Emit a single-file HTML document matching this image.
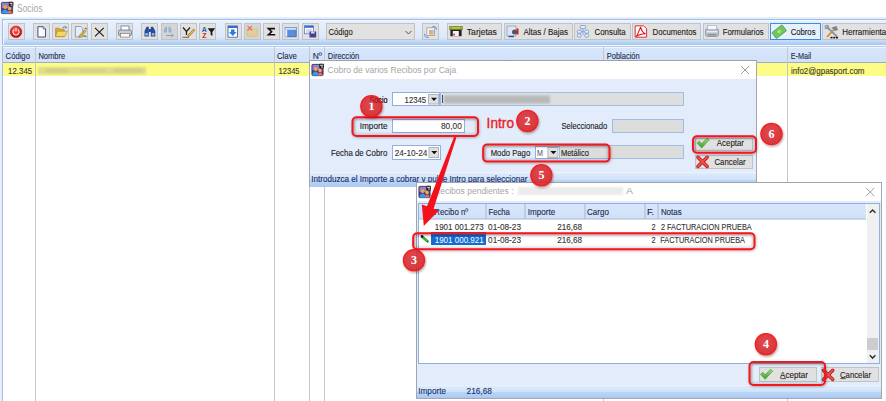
<!DOCTYPE html><html><head><meta charset="utf-8"><style>html,body{margin:0;padding:0;width:886px;height:401px;overflow:hidden;background:#fff}svg{display:block;font-family:"Liberation Sans",sans-serif}</style></head><body><svg width="886" height="401" viewBox="0 0 886 401" font-family="Liberation Sans, sans-serif"><rect x="0" y="0" width="886" height="401" fill="#ffffff" /><g transform="translate(1,2)"><rect x="0.3" y="0.3" width="11.4" height="11.4" rx="1.2" fill="#5a3a98" stroke="#2a2a3a" stroke-width="0.6"/><rect x="1" y="1" width="8" height="5" fill="#a090e0" opacity="0.8"/><circle cx="4.2" cy="5" r="1.9" fill="#f0a830"/><circle cx="8.6" cy="6.6" r="1.8" fill="#f0b040"/><path d="M0.8 11.6 Q1 8 4.2 7.6 Q7 8 7.2 11.6Z" fill="#28a0f0"/><path d="M6.2 11.6 Q6.4 9 8.6 8.8 Q11 9 11.3 11.6Z" fill="#f07050"/><rect x="7.8" y="-0.2" width="4.6" height="4.6" rx="0.8" fill="#1a1a1a"/><rect x="8.6" y="0.8" width="3" height="0.9" fill="#fff"/><rect x="9.6" y="2.6" width="2" height="0.9" fill="#fff"/></g><text x="17" y="12.2" font-size="10" fill="#a6a6a6" textLength="25.4" lengthAdjust="spacingAndGlyphs" >Socios</text><defs><linearGradient id="tb" x1="0" y1="0" x2="0" y2="1"><stop offset="0" stop-color="#e8f0fc"/><stop offset="0.7" stop-color="#dce9fa"/><stop offset="0.85" stop-color="#c4daf6"/><stop offset="1" stop-color="#a4c5f0"/></linearGradient><linearGradient id="hdr" x1="0" y1="0" x2="0" y2="1"><stop offset="0" stop-color="#d8e6fa"/><stop offset="1" stop-color="#d0e1f9"/></linearGradient><linearGradient id="sb" x1="0" y1="0" x2="0" y2="1"><stop offset="0" stop-color="#f0f6fe"/><stop offset="0.12" stop-color="#dde9fb"/><stop offset="0.5" stop-color="#d0e2f9"/><stop offset="0.55" stop-color="#bcd5f6"/><stop offset="1" stop-color="#aac9f3"/></linearGradient><filter id="sh" x="-30%" y="-30%" width="160%" height="160%"><feDropShadow dx="0.8" dy="1.5" stdDeviation="1.2" flood-color="#000" flood-opacity="0.35"/></filter><filter id="sh2" x="-10%" y="-30%" width="120%" height="160%"><feDropShadow dx="0.6" dy="1" stdDeviation="1" flood-color="#000" flood-opacity="0.3"/></filter><linearGradient id="chk" x1="0" y1="0" x2="0" y2="1"><stop offset="0" stop-color="#9be87a"/><stop offset="1" stop-color="#34a020"/></linearGradient><radialGradient id="pw" cx="0.45" cy="0.35" r="0.65"><stop offset="0" stop-color="#ff6a6a"/><stop offset="0.6" stop-color="#e02020"/><stop offset="1" stop-color="#b01010"/></radialGradient><filter id="bl2"><feGaussianBlur stdDeviation="0.8"/></filter><filter id="bl"><feGaussianBlur stdDeviation="1.3"/></filter><radialGradient id="cg" cx="0.45" cy="0.4" r="0.6"><stop offset="0" stop-color="#e03c40"/><stop offset="1" stop-color="#d22a30"/></radialGradient></defs><rect x="0" y="17" width="886" height="384" fill="#e6eefa" /><rect x="2" y="19" width="886" height="26" fill="url(#tb)" /><rect x="2" y="19" width="886" height="1" fill="#9dbde9" /><rect x="2" y="19" width="1" height="26" fill="#9dbde9" /><rect x="3" y="20" width="886" height="1" fill="#f4f8fe" /><rect x="3" y="20" width="1" height="24" fill="#f4f8fe" /><rect x="2" y="45" width="886" height="1" fill="#f7fafe" /><rect x="8.5" y="23.5" width="16" height="16" fill="#e1e1e1" stroke="#c2c2c2" stroke-width="1"/><rect x="33.5" y="23.5" width="16" height="16" fill="#e1e1e1" stroke="#c2c2c2" stroke-width="1"/><rect x="52.5" y="23.5" width="16" height="16" fill="#e1e1e1" stroke="#c2c2c2" stroke-width="1"/><rect x="71.5" y="23.5" width="16" height="16" fill="#e1e1e1" stroke="#c2c2c2" stroke-width="1"/><rect x="91.5" y="23.5" width="16" height="16" fill="#e1e1e1" stroke="#c2c2c2" stroke-width="1"/><rect x="116.5" y="23.5" width="16" height="16" fill="#e1e1e1" stroke="#c2c2c2" stroke-width="1"/><rect x="141.5" y="23.5" width="16" height="16" fill="#e1e1e1" stroke="#c2c2c2" stroke-width="1"/><rect x="161.5" y="23.5" width="16" height="16" fill="#d5d5d5" stroke="#c2c2c2" stroke-width="1"/><rect x="180.5" y="23.5" width="16" height="16" fill="#e1e1e1" stroke="#c2c2c2" stroke-width="1"/><rect x="199.5" y="23.5" width="16" height="16" fill="#e1e1e1" stroke="#c2c2c2" stroke-width="1"/><rect x="225.5" y="23.5" width="16" height="16" fill="#e1e1e1" stroke="#c2c2c2" stroke-width="1"/><rect x="244.5" y="23.5" width="16" height="16" fill="#d5d5d5" stroke="#c2c2c2" stroke-width="1"/><rect x="263.5" y="23.5" width="16" height="16" fill="#e1e1e1" stroke="#c2c2c2" stroke-width="1"/><rect x="282.5" y="23.5" width="16" height="16" fill="#e1e1e1" stroke="#c2c2c2" stroke-width="1"/><rect x="302.5" y="23.5" width="16" height="16" fill="#e1e1e1" stroke="#c2c2c2" stroke-width="1"/><rect x="422.5" y="23.5" width="16" height="16" fill="#e1e1e1" stroke="#c2c2c2" stroke-width="1"/><rect x="326.5" y="23.5" width="88" height="16" fill="#e1e1e1" stroke="#c2c2c2" stroke-width="1"/><text x="328.5" y="34.6" font-size="9.6" fill="#1b1b1b" stroke="#1b1b1b" stroke-width="0.12" textLength="24.2" lengthAdjust="spacingAndGlyphs" >Código</text><path d="M405.5 31 L408.5 34 L411.5 31" fill="none" stroke="#555" stroke-width="1"/><rect x="447.5" y="23.5" width="54" height="16" fill="#e1e1e1" stroke="#c2c2c2" stroke-width="1"/><text x="466.8" y="34.8" font-size="9.6" fill="#1b1b1b" stroke="#1b1b1b" stroke-width="0.12" textLength="30.1" lengthAdjust="spacingAndGlyphs" >Tarjetas</text><rect x="504.5" y="23.5" width="68" height="16" fill="#e1e1e1" stroke="#c2c2c2" stroke-width="1"/><text x="523.5" y="34.8" font-size="9.6" fill="#1b1b1b" stroke="#1b1b1b" stroke-width="0.12" textLength="44.5" lengthAdjust="spacingAndGlyphs" >Altas / Bajas</text><rect x="574.5" y="23.5" width="56" height="16" fill="#e1e1e1" stroke="#c2c2c2" stroke-width="1"/><text x="594.5" y="34.8" font-size="9.6" fill="#1b1b1b" stroke="#1b1b1b" stroke-width="0.12" textLength="31.1" lengthAdjust="spacingAndGlyphs" >Consulta</text><rect x="632.5" y="23.5" width="68" height="16" fill="#e1e1e1" stroke="#c2c2c2" stroke-width="1"/><text x="652.5" y="34.8" font-size="9.6" fill="#1b1b1b" stroke="#1b1b1b" stroke-width="0.12" textLength="43.9" lengthAdjust="spacingAndGlyphs" >Documentos</text><rect x="703.5" y="23.5" width="65" height="16" fill="#e1e1e1" stroke="#c2c2c2" stroke-width="1"/><text x="722.7" y="34.8" font-size="9.6" fill="#1b1b1b" stroke="#1b1b1b" stroke-width="0.12" textLength="40.9" lengthAdjust="spacingAndGlyphs" >Formularios</text><rect x="770.5" y="23.5" width="50" height="16" fill="#e5f1fb" stroke="#3b8de3" stroke-width="1"/><text x="790.7" y="34.8" font-size="9.6" fill="#1b1b1b" stroke="#1b1b1b" stroke-width="0.12" textLength="24.8" lengthAdjust="spacingAndGlyphs" >Cobros</text><rect x="822.5" y="23.5" width="79" height="16" fill="#e1e1e1" stroke="#c2c2c2" stroke-width="1"/><text x="842.3" y="34.8" font-size="9.6" fill="#1b1b1b" stroke="#1b1b1b" stroke-width="0.12" textLength="48" lengthAdjust="spacingAndGlyphs" >Herramientas</text><g><circle cx="16" cy="31.8" r="5.8" fill="url(#pw)" stroke="#a01010" stroke-width="0.5"/><path d="M14.1 29.4 A3.1 3.1 0 1 0 17.9 29.4" fill="none" stroke="#fff" stroke-width="1.1" stroke-opacity="0.9"/><path d="M16 27.6 V31.2" stroke="#fff" stroke-width="1.1" stroke-opacity="0.9"/><path d="M37.9 26.7 H43.2 L45.5 29 V37 H37.9Z" fill="#f4f7fc" stroke="#2a4580" stroke-width="0.9" stroke-linejoin="round"/><path d="M43.2 26.7 V29 H45.5" fill="#c8d4ea" stroke="#2a4580" stroke-width="0.6"/><rect x="39" y="28" width="3" height="8" fill="#fff"/><path d="M55.6 28.2 H59.2 L60.2 29.2 H64.2 V36.6 H55.6Z" fill="#e0a830" stroke="#906818" stroke-width="0.5"/><path d="M57.2 31.2 H67.4 L64.9 36.6 H55.6Z" fill="#f6d466" stroke="#a07820" stroke-width="0.5"/><path d="M62.5 27.6 Q64.8 25.6 66.6 27.6" fill="none" stroke="#4a78c8" stroke-width="1"/><path d="M65.6 26.6 L67 28 L65 28.4Z" fill="#4a78c8"/><path d="M75.4 26.5 H80.8 L82.8 28.5 V37 H75.4Z" fill="#e6ecf8" stroke="#6880b4" stroke-width="0.7"/><path d="M78.6 36.2 L84.6 30 L86 31.4 L80 37.4Z" fill="#e8b830" stroke="#6a5010" stroke-width="0.5"/><path d="M84.3 28.6 L86.2 27.4 L87 29.8Z" fill="#d03030"/><path d="M83.5 35.6 L86.5 36.6" stroke="#30a030" stroke-width="1.4"/><path d="M95 27.8 L103.8 36.3 M103.8 27.8 L95 36.3" stroke="#181818" stroke-width="1.1"/><rect x="121" y="26" width="8" height="5" fill="#fff" stroke="#4a7ad0" stroke-width="0.8"/><rect x="118.5" y="30" width="13" height="5.5" rx="1.5" fill="#c8ccd2" stroke="#60646a" stroke-width="0.7"/><rect x="120.5" y="33.5" width="9" height="3.6" fill="#fafafa" stroke="#707070" stroke-width="0.6"/><path d="M144.5 36.5 V31 L146.5 26.8 H148.8 V36.5Z M150.8 36.5 V26.8 H153 L155.3 31 V36.5Z" fill="#2a4c9c"/><rect x="148.6" y="29" width="2.4" height="3" fill="#2a4c9c"/><circle cx="146.6" cy="34.3" r="1.4" fill="#9cb8ea"/><circle cx="153.1" cy="34.3" r="1.4" fill="#9cb8ea"/><path d="M164 32.5 V29.5 L165.5 26.8 H167 V32.5Z M168.5 32.5 V26.8 H170 L171.5 29.5 V32.5Z" fill="#9ab0d0"/><path d="M166 35.5 H173 M171.5 34 L173.5 35.5 L171.5 37" fill="none" stroke="#7aa0d8" stroke-width="1"/><path d="M183 27.5 L186.5 31.5 V35 M190 27.5 L186.5 31.5" fill="none" stroke="#222" stroke-width="1.3"/><path d="M187.6 35.6 L193.6 29 L194.8 30.2 L188.8 36.8Z" fill="#f0c030" stroke="#5a4010" stroke-width="0.5"/><path d="M182.5 37.3 H189" stroke="#444" stroke-width="0.8"/><text x="201.8" y="31.6" font-size="7" font-weight="bold" fill="#2a5ab8">A</text><text x="202.3" y="38.2" font-size="7" font-weight="bold" fill="#c82828">Z</text><path d="M207.6 28.2 H215.2 L212.4 32 V36 L210.6 34.8 V32Z" fill="#1a1a1a"/><rect x="228" y="26" width="9.5" height="11.2" fill="#fff" stroke="#2a5aaa" stroke-width="0.8"/><rect x="228" y="26" width="9.5" height="2" fill="#3a6ac8"/><path d="M231 29.5 H234.5 V32 H236.5 L232.75 36 L229 32 H231Z" fill="#2a7ae0"/><rect x="247" y="29" width="10.5" height="7.3" rx="0.8" fill="#e2cf98" stroke="#c8b070" stroke-width="0.5"/><path d="M247.5 26 L252 30.5 M252 26 L247.5 30.5" stroke="#e87060" stroke-width="1.1"/><path d="M275 28.6 H268.4 L271.6 31.7 L268.4 34.8 H275.2" fill="none" stroke="#111" stroke-width="1.6" stroke-linejoin="miter"/><rect x="285.2" y="27.6" width="11" height="9.2" fill="#5c8ee0" stroke="#2a58a8" stroke-width="0.7"/><rect x="285.2" y="27.6" width="11" height="2.2" fill="#cfe0fa"/><rect x="285.2" y="29.8" width="2" height="7" fill="#e8f0fc"/><rect x="304.5" y="25.8" width="9" height="8" fill="#fff" stroke="#4070c0" stroke-width="0.7"/><rect x="304.5" y="25.8" width="9" height="2" fill="#3a6ac8"/><path d="M306 30 H312 M306 32 H312" stroke="#88a" stroke-width="0.6"/><rect x="309.5" y="31.5" width="6.7" height="6" fill="#4a3a9a"/><rect x="311" y="31.5" width="3.5" height="2" fill="#dde"/><rect x="426.8" y="27.8" width="7.8" height="7.8" fill="#eef4fc" stroke="#7aa0dc" stroke-width="0.8"/><rect x="429" y="30" width="4.6" height="4.6" fill="#f0a868"/><path d="M432.5 26.6 Q436.6 25.8 436.4 29.6" fill="none" stroke="#4a78c8" stroke-width="0.9"/><path d="M428.6 37.4 Q424.4 37.8 424.6 33.8" fill="none" stroke="#4a78c8" stroke-width="0.9"/><rect x="449.8" y="26.6" width="12.4" height="3.2" fill="#b4c030" stroke="#4a4a10" stroke-width="0.5"/><circle cx="451.3" cy="28.2" r="0.8" fill="#30d030"/><circle cx="460.7" cy="28.2" r="0.8" fill="#30d030"/><rect x="450.4" y="29.8" width="11.2" height="6.4" fill="#222"/><rect x="452.8" y="31" width="6" height="5.2" fill="#f4f4f4"/><rect x="453.4" y="33.6" width="1.4" height="2" fill="#d02020"/><rect x="507" y="26" width="9" height="10" fill="#dfe6f3" stroke="#6a88c0" stroke-width="0.6"/><circle cx="514.5" cy="32" r="2.5" fill="#555"/><rect x="516.5" y="28.5" width="2" height="6" fill="#c82020"/><path d="M508.5 36.5 H514" stroke="#2a4ad0" stroke-width="1.4"/><path d="M583 28.5 V35 M579.5 31.7 H586.5" stroke="#7aa0d8" stroke-width="0.8"/><rect x="580.3" y="25.6" width="5.4" height="3" rx="0.6" fill="#eaf2fc" stroke="#5a88d0" stroke-width="0.7"/><rect x="577.3" y="30.2" width="4" height="3" rx="1.2" fill="#eaf2fc" stroke="#5a88d0" stroke-width="0.7"/><rect x="584.7" y="30.2" width="4" height="3" rx="1.2" fill="#eaf2fc" stroke="#5a88d0" stroke-width="0.7"/><rect x="577.3" y="34" width="4" height="3" rx="1.2" fill="#eaf2fc" stroke="#5a88d0" stroke-width="0.7"/><rect x="584.7" y="34" width="4" height="3" rx="1.2" fill="#eaf2fc" stroke="#5a88d0" stroke-width="0.7"/><path d="M635.2 25.8 H643.6 L646.6 28.8 V37.2 H635.2Z" fill="#fff" stroke="#d81818" stroke-width="0.9"/><path d="M636.8 36 C638 33 640 29 640.6 26.8 C641.2 29.5 642.5 32.5 645.5 33.8 C642 33.8 639.5 34.5 636.8 36Z" fill="none" stroke="#e01010" stroke-width="1.1"/><rect x="705.5" y="28.5" width="13" height="8" rx="2" fill="#b4bcc6" stroke="#7c8490" stroke-width="0.6"/><rect x="707.5" y="25.5" width="9" height="4" fill="#f4f8fc" stroke="#8aa0b8" stroke-width="0.5"/><rect x="706.5" y="31" width="11" height="1.5" fill="#e6ecf2"/><rect x="708" y="34" width="8" height="1.6" fill="#8a929c"/><g transform="rotate(-38 779 31.5)"><rect x="772.5" y="28" width="13" height="7.5" rx="0.8" fill="#74c460" stroke="#3f8a35" stroke-width="0.6"/><circle cx="779" cy="31.75" r="1.8" fill="#a8e090"/></g><path d="M826.5 26.5 L837 36.5" stroke="#8894a4" stroke-width="1.8"/><circle cx="826.8" cy="27" r="1.8" fill="none" stroke="#8894a4" stroke-width="1.1"/><path d="M827 37 L833.5 30" stroke="#c8902a" stroke-width="1.7"/><path d="M831.5 27.5 L836.5 26 L838 30 L834.5 31Z" fill="#7a8494"/><rect x="830.5" y="36.8" width="2" height="1.6" fill="#111"/><rect x="833.3" y="36.8" width="2" height="1.6" fill="#111"/><rect x="836" y="36.8" width="2" height="1.6" fill="#111"/></g><rect x="2" y="46" width="886" height="355" fill="#ffffff" /><rect x="2" y="46" width="886" height="1" fill="#b3cbee" /><rect x="2" y="46" width="1" height="355" fill="#a4bfe9" /><rect x="3" y="47" width="886" height="15" fill="url(#hdr)" /><rect x="3" y="47" width="886" height="1" fill="#f2f7fd" /><rect x="3" y="62" width="886" height="1" fill="#a0acbe" /><rect x="3" y="63" width="886" height="13" fill="#fcfc86" /><rect x="35" y="47" width="1" height="354" fill="#c6c6c6" /><rect x="274" y="47" width="1" height="354" fill="#c6c6c6" /><rect x="309" y="47" width="1" height="354" fill="#c6c6c6" /><rect x="324" y="47" width="1" height="354" fill="#c6c6c6" /><rect x="603" y="47" width="1" height="354" fill="#c6c6c6" /><rect x="787" y="47" width="1" height="354" fill="#c6c6c6" /><text x="5.6" y="58.8" font-size="9.6" fill="#1e2a4a" stroke="#1e2a4a" stroke-width="0.12" textLength="24.3" lengthAdjust="spacingAndGlyphs" >Código</text><text x="38.4" y="58.8" font-size="9.6" fill="#1e2a4a" stroke="#1e2a4a" stroke-width="0.12" textLength="26.8" lengthAdjust="spacingAndGlyphs" >Nombre</text><text x="277" y="58.8" font-size="9.6" fill="#1e2a4a" stroke="#1e2a4a" stroke-width="0.12" textLength="19.9" lengthAdjust="spacingAndGlyphs" >Clave</text><text x="312.7" y="58.8" font-size="9.6" fill="#1e2a4a" stroke="#1e2a4a" stroke-width="0.12" textLength="9.2" lengthAdjust="spacingAndGlyphs" >Nº</text><text x="327.8" y="58.8" font-size="9.6" fill="#1e2a4a" stroke="#1e2a4a" stroke-width="0.12" textLength="31.4" lengthAdjust="spacingAndGlyphs" >Dirección</text><text x="606.7" y="58.8" font-size="9.6" fill="#1e2a4a" stroke="#1e2a4a" stroke-width="0.12" textLength="33" lengthAdjust="spacingAndGlyphs" >Población</text><text x="790.7" y="58.8" font-size="9.6" fill="#1e2a4a" stroke="#1e2a4a" stroke-width="0.12" textLength="20.5" lengthAdjust="spacingAndGlyphs" >E-Mail</text><text x="8.1" y="74.1" font-size="9.6" fill="#3a3a2a" stroke="#3a3a2a" stroke-width="0.12" textLength="24.1" lengthAdjust="spacingAndGlyphs" >12.345</text><text x="278.5" y="74.1" font-size="9.6" fill="#3a3a2a" stroke="#3a3a2a" stroke-width="0.12" textLength="21.1" lengthAdjust="spacingAndGlyphs" >12345</text><text x="791" y="74.1" font-size="9.6" fill="#3a3a2a" stroke="#3a3a2a" stroke-width="0.12" textLength="73.5" lengthAdjust="spacingAndGlyphs" >info2@gpasport.com</text><g filter="url(#bl)" opacity="0.8"><rect x="38" y="67" width="108" height="7.5" fill="#d6d68e"/><rect x="46" y="68" width="22" height="5" fill="#c8c888"/><rect x="80" y="68" width="26" height="5" fill="#cccc8a"/><rect x="114" y="68" width="28" height="5" fill="#c8c888"/></g><rect x="309" y="60" width="448" height="127" fill="#e2ecfb" /><rect x="309" y="60" width="448" height="1" fill="#9aa2ae" /><rect x="309" y="60" width="1" height="127" fill="#9ea8b8" /><rect x="756" y="60" width="1" height="127" fill="#a4a6aa" /><rect x="310" y="61" width="446" height="18" fill="#ffffff" /><g transform="translate(311.5,64)"><rect x="0.3" y="0.3" width="11.4" height="11.4" rx="1.2" fill="#5a3a98" stroke="#2a2a3a" stroke-width="0.6"/><rect x="1" y="1" width="8" height="5" fill="#a090e0" opacity="0.8"/><circle cx="4.2" cy="5" r="1.9" fill="#f0a830"/><circle cx="8.6" cy="6.6" r="1.8" fill="#f0b040"/><path d="M0.8 11.6 Q1 8 4.2 7.6 Q7 8 7.2 11.6Z" fill="#28a0f0"/><path d="M6.2 11.6 Q6.4 9 8.6 8.8 Q11 9 11.3 11.6Z" fill="#f07050"/><rect x="7.8" y="-0.2" width="4.6" height="4.6" rx="0.8" fill="#1a1a1a"/><rect x="8.6" y="0.8" width="3" height="0.9" fill="#fff"/><rect x="9.6" y="2.6" width="2" height="0.9" fill="#fff"/></g><text x="327.6" y="73" font-size="9.6" fill="#a6a6a6" textLength="128.7" lengthAdjust="spacingAndGlyphs" >Cobro de varios Recibos por Caja</text><path d="M741 66 L749 74 M749 66 L741 74" stroke="#8c8c8c" stroke-width="0.85"/><rect x="310" y="172" width="446" height="15" fill="url(#sb)" /><text x="311.2" y="181.8" font-size="9.6" fill="#17306c" stroke="#17306c" stroke-width="0.15" textLength="216.2" lengthAdjust="spacingAndGlyphs" >Introduzca el Importe a cobrar y pulse Intro para seleccionar</text><text x="369.4" y="102.9" font-size="9.6" fill="#1b1b1b" stroke="#1b1b1b" stroke-width="0.12" textLength="18.2" lengthAdjust="spacingAndGlyphs" >Socio</text><rect x="392.5" y="92.5" width="47" height="13" fill="#ffffff" stroke="#8fb0e0" stroke-width="1"/><text x="404.6" y="102.9" font-size="9.6" fill="#333" stroke="#333" stroke-width="0.12" textLength="21.6" lengthAdjust="spacingAndGlyphs" >12345</text><rect x="428.5" y="94.5" width="10" height="9.5" fill="#e0e0e0" stroke="#b4b4b4" stroke-width="1"/><path d="M431.0 97.75 H437.0 L434.0 101.05Z" fill="#111"/><rect x="440.5" y="92.5" width="243" height="13" fill="#dedede" stroke="#a2bde4" stroke-width="1"/><g filter="url(#bl)"><rect x="444" y="95.5" width="106" height="8" fill="#b9b9b9"/></g><rect x="442" y="95" width="1" height="8" fill="#3a4a8a" /><text x="359.7" y="129" font-size="9.6" fill="#1b1b1b" stroke="#1b1b1b" stroke-width="0.12" textLength="27.9" lengthAdjust="spacingAndGlyphs" >Importe</text><rect x="392.5" y="119.5" width="72" height="13" fill="#ffffff" stroke="#8fb0e0" stroke-width="1"/><text x="441" y="129" font-size="9.6" fill="#333" stroke="#333" stroke-width="0.12" textLength="20.8" lengthAdjust="spacingAndGlyphs" >80,00</text><text x="486.6" y="128.2" font-size="13.8" fill="#ec1c24" stroke="#ec1c24" stroke-width="0.35" textLength="27.4" lengthAdjust="spacingAndGlyphs" >Intro</text><text x="561.4" y="129" font-size="9.6" fill="#1b1b1b" stroke="#1b1b1b" stroke-width="0.12" textLength="45.8" lengthAdjust="spacingAndGlyphs" >Seleccionado</text><rect x="612.5" y="119.5" width="71" height="13" fill="#dcdcdc" stroke="#a2bde4" stroke-width="1"/><text x="330.9" y="155.8" font-size="9.6" fill="#1b1b1b" stroke="#1b1b1b" stroke-width="0.12" textLength="56.4" lengthAdjust="spacingAndGlyphs" >Fecha de Cobro</text><rect x="392.5" y="145.5" width="48" height="14" fill="#ffffff" stroke="#8fb0e0" stroke-width="1"/><text x="394.7" y="155.8" font-size="9.6" fill="#333" stroke="#333" stroke-width="0.12" textLength="32.7" lengthAdjust="spacingAndGlyphs" >24-10-24</text><rect x="429.0" y="147.5" width="9.5" height="10" fill="#e0e0e0" stroke="#b4b4b4" stroke-width="1"/><path d="M431.25 151.0 H437.25 L434.25 154.3Z" fill="#111"/><text x="490.7" y="155.8" font-size="9.6" fill="#1b1b1b" stroke="#1b1b1b" stroke-width="0.12" textLength="39.5" lengthAdjust="spacingAndGlyphs" >Modo Pago</text><rect x="535.5" y="146.5" width="24" height="12" fill="#ffffff" stroke="#8fb0e0" stroke-width="1"/><text x="537" y="155.6" font-size="9.6" fill="#505050" textLength="6" lengthAdjust="spacingAndGlyphs" >M</text><rect x="547.9" y="147.5" width="10" height="10" fill="#e0e0e0" stroke="#b4b4b4" stroke-width="1"/><path d="M550.4 151.0 H556.4 L553.4 154.3Z" fill="#111"/><rect x="559.5" y="145.5" width="124" height="13" fill="#dcdcdc" stroke="#a2bde4" stroke-width="1"/><text x="560.9" y="155.7" font-size="9.6" fill="#1b1b1b" stroke="#1b1b1b" stroke-width="0.12" textLength="28.1" lengthAdjust="spacingAndGlyphs" >Metálico</text><rect x="695.5" y="138.5" width="57" height="12" fill="#e1e1e1" stroke="#c2c2c2" stroke-width="1"/><text x="716.8" y="146" font-size="9.6" fill="#1b1b1b" stroke="#1b1b1b" stroke-width="0.12" textLength="27.2" lengthAdjust="spacingAndGlyphs" >Aceptar</text><rect x="695.5" y="155.5" width="57" height="13" fill="#e1e1e1" stroke="#c2c2c2" stroke-width="1"/><text x="714.5" y="164.6" font-size="9.6" fill="#1b1b1b" stroke="#1b1b1b" stroke-width="0.12" textLength="31.1" lengthAdjust="spacingAndGlyphs" >Cancelar</text><path transform="translate(696.7,137.8) scale(1)" d="M0.3 5.3 L2.8 3.3 L4.9 6 L10.4 0.2 L12.5 2 L5 10.2 Z" fill="url(#chk)" stroke="#4a8a3a" stroke-width="0.6" stroke-linejoin="round"/><g transform="translate(696.7,156) scale(1)"><path d="M1.2 1.2 L10.5 10.5 M10.5 1.2 L1.2 10.5" stroke="#b81818" stroke-width="3.4" stroke-linecap="round"/><path d="M1.2 1.2 L10.5 10.5 M10.5 1.2 L1.2 10.5" stroke="#f05050" stroke-width="1.8" stroke-linecap="round"/></g><rect x="416" y="182" width="466" height="217" fill="#e2ecfb" /><rect x="416" y="182" width="466" height="1" fill="#a0a4aa" /><rect x="416" y="182" width="1" height="217" fill="#a0a6b0" /><rect x="881" y="182" width="1" height="217" fill="#a4a6aa" /><rect x="416" y="398" width="466" height="1" fill="#9ea8b8" /><rect x="417" y="183" width="464" height="18" fill="#ffffff" /><g transform="translate(418.5,186)"><rect x="0.3" y="0.3" width="11.4" height="11.4" rx="1.2" fill="#5a3a98" stroke="#2a2a3a" stroke-width="0.6"/><rect x="1" y="1" width="8" height="5" fill="#a090e0" opacity="0.8"/><circle cx="4.2" cy="5" r="1.9" fill="#f0a830"/><circle cx="8.6" cy="6.6" r="1.8" fill="#f0b040"/><path d="M0.8 11.6 Q1 8 4.2 7.6 Q7 8 7.2 11.6Z" fill="#28a0f0"/><path d="M6.2 11.6 Q6.4 9 8.6 8.8 Q11 9 11.3 11.6Z" fill="#f07050"/><rect x="7.8" y="-0.2" width="4.6" height="4.6" rx="0.8" fill="#1a1a1a"/><rect x="8.6" y="0.8" width="3" height="0.9" fill="#fff"/><rect x="9.6" y="2.6" width="2" height="0.9" fill="#fff"/></g><text x="434" y="194.4" font-size="9.6" fill="#a6a6a6" textLength="79.6" lengthAdjust="spacingAndGlyphs" >Recibos pendientes :</text><g filter="url(#bl)"><rect x="518" y="187" width="105" height="8" fill="#ebebeb"/></g><text x="626" y="194.2" font-size="9.6" fill="#a6a6a6" textLength="7" lengthAdjust="spacingAndGlyphs" >A</text><path d="M866.2 188 L874.2 196 M874.2 188 L866.2 196" stroke="#8c8c8c" stroke-width="0.85"/><rect x="418" y="203" width="462" height="161" fill="#ffffff" /><rect x="418" y="203" width="462" height="1" fill="#8fb0e0" /><rect x="418" y="363" width="462" height="1" fill="#8fb0e0" /><rect x="418" y="203" width="1" height="161" fill="#8fb0e0" /><rect x="879" y="203" width="1" height="161" fill="#8fb0e0" /><rect x="419" y="204" width="447" height="15" fill="url(#hdr)" /><rect x="419" y="218.5" width="447" height="1" fill="#a8b8cc" /><rect x="485.5" y="204" width="1" height="15" fill="#a8b8cc" /><rect x="524.5" y="204" width="1" height="15" fill="#a8b8cc" /><rect x="584.5" y="204" width="1" height="15" fill="#a8b8cc" /><rect x="644.5" y="204" width="1" height="15" fill="#a8b8cc" /><rect x="657.5" y="204" width="1" height="15" fill="#a8b8cc" /><rect x="867" y="204" width="12" height="159" fill="#f0f0f0" /><path d="M869.8 212.8 L872.6 210 L875.4 212.8" fill="none" stroke="#333" stroke-width="1.5"/><path d="M869.8 355.3 L872.6 358.1 L875.4 355.3" fill="none" stroke="#333" stroke-width="1.5"/><rect x="867" y="338" width="11" height="12" fill="#cdcdcd" /><text x="434.3" y="215.3" font-size="9.6" fill="#1e2a4a" stroke="#1e2a4a" stroke-width="0.12" textLength="33.9" lengthAdjust="spacingAndGlyphs" >Recibo nº</text><text x="488.5" y="215.3" font-size="9.6" fill="#1e2a4a" stroke="#1e2a4a" stroke-width="0.12" textLength="21.4" lengthAdjust="spacingAndGlyphs" >Fecha</text><text x="527.8" y="215.3" font-size="9.6" fill="#1e2a4a" stroke="#1e2a4a" stroke-width="0.12" textLength="27.4" lengthAdjust="spacingAndGlyphs" >Importe</text><text x="587.1" y="215.3" font-size="9.6" fill="#1e2a4a" stroke="#1e2a4a" stroke-width="0.12" textLength="21.8" lengthAdjust="spacingAndGlyphs" >Cargo</text><text x="647" y="215.3" font-size="9.6" fill="#1e2a4a" stroke="#1e2a4a" stroke-width="0.12" textLength="7.2" lengthAdjust="spacingAndGlyphs" >F.</text><text x="660.9" y="215.3" font-size="9.6" fill="#1e2a4a" stroke="#1e2a4a" stroke-width="0.12" textLength="20.7" lengthAdjust="spacingAndGlyphs" >Notas</text><text x="434.7" y="230.1" font-size="9.6" fill="#333" stroke="#333" stroke-width="0.12" textLength="49" lengthAdjust="spacingAndGlyphs" >1901 001.273</text><text x="488.1" y="230.1" font-size="9.6" fill="#333" stroke="#333" stroke-width="0.12" textLength="32.9" lengthAdjust="spacingAndGlyphs" >01-08-23</text><text x="557.2" y="230.1" font-size="9.6" fill="#333" stroke="#333" stroke-width="0.12" textLength="24.8" lengthAdjust="spacingAndGlyphs" >216,68</text><text x="651.5" y="230.1" font-size="9.6" fill="#333" stroke="#333" stroke-width="0.12" textLength="4.1" lengthAdjust="spacingAndGlyphs" >2</text><text x="660.9" y="230.1" font-size="9.6" fill="#333" stroke="#333" stroke-width="0.12" textLength="90.8" lengthAdjust="spacingAndGlyphs" >2 FACTURACION PRUEBA</text><rect x="431" y="232" width="55" height="13" fill="#0f6dd2" /><text x="434.7" y="242.7" font-size="9.6" fill="#ffffff" textLength="49" lengthAdjust="spacingAndGlyphs" >1901 000.921</text><text x="488.1" y="242.7" font-size="9.6" fill="#333" stroke="#333" stroke-width="0.12" textLength="32.9" lengthAdjust="spacingAndGlyphs" >01-08-23</text><text x="557.2" y="242.7" font-size="9.6" fill="#333" stroke="#333" stroke-width="0.12" textLength="24.8" lengthAdjust="spacingAndGlyphs" >216,68</text><text x="651.5" y="242.7" font-size="9.6" fill="#333" stroke="#333" stroke-width="0.12" textLength="4.1" lengthAdjust="spacingAndGlyphs" >2</text><text x="660.3" y="242.7" font-size="9.6" fill="#333" stroke="#333" stroke-width="0.12" textLength="84.7" lengthAdjust="spacingAndGlyphs" >FACTURACION PRUEBA</text><path d="M422.5 237 L427.6 241.4" stroke="#1e7a1e" stroke-width="2.4" stroke-linecap="round"/><path d="M422.8 237.3 L427.3 241.1" stroke="#44d040" stroke-width="1.2"/><rect x="420.8" y="235.2" width="2.4" height="2.4" fill="#111"/><rect x="417" y="385" width="464" height="13" fill="url(#sb)" /><text x="418.3" y="394" font-size="9.6" fill="#17306c" stroke="#17306c" stroke-width="0.12" textLength="27.7" lengthAdjust="spacingAndGlyphs" >Importe</text><text x="466.6" y="394" font-size="9.6" fill="#17306c" stroke="#17306c" stroke-width="0.12" textLength="25.2" lengthAdjust="spacingAndGlyphs" >216,68</text><rect x="759.5" y="367.5" width="57" height="14" fill="#e1e1e1" stroke="#c2c2c2" stroke-width="1"/><text x="780.1" y="377.5" font-size="9.6" fill="#1b1b1b" stroke="#1b1b1b" stroke-width="0.12" textLength="27.8" lengthAdjust="spacingAndGlyphs" >Aceptar</text><rect x="780.5" y="378.3" width="5.5" height="0.8" fill="#333" /><rect x="821.5" y="367.5" width="57" height="14" fill="#e1e1e1" stroke="#c2c2c2" stroke-width="1"/><text x="840" y="377.5" font-size="9.6" fill="#1b1b1b" stroke="#1b1b1b" stroke-width="0.12" textLength="31" lengthAdjust="spacingAndGlyphs" >Cancelar</text><rect x="840.3" y="378.3" width="5.5" height="0.8" fill="#333" /><path transform="translate(760.2,369) scale(1)" d="M0.3 5.3 L2.8 3.3 L4.9 6 L10.4 0.2 L12.5 2 L5 10.2 Z" fill="url(#chk)" stroke="#4a8a3a" stroke-width="0.6" stroke-linejoin="round"/><g transform="translate(822.3,369) scale(1)"><path d="M1.2 1.2 L10.5 10.5 M10.5 1.2 L1.2 10.5" stroke="#b81818" stroke-width="3.4" stroke-linecap="round"/><path d="M1.2 1.2 L10.5 10.5 M10.5 1.2 L1.2 10.5" stroke="#f05050" stroke-width="1.8" stroke-linecap="round"/></g><rect x="354.1" y="118.89999999999999" width="122.3" height="15.500000000000004" rx="3" fill="none" stroke="#000" stroke-opacity="0.18" stroke-width="1.8" filter="url(#bl2)"/><rect x="352.5" y="117.3" width="125.5" height="18.700000000000003" rx="4" fill="none" stroke="#f6121a" stroke-width="2" filter="url(#sh2)"/><rect x="484.8" y="146.1" width="123.10000000000001" height="13.899999999999995" rx="3" fill="none" stroke="#000" stroke-opacity="0.18" stroke-width="1.8" filter="url(#bl2)"/><rect x="483.2" y="144.5" width="126.30000000000001" height="17.099999999999994" rx="4" fill="none" stroke="#f6121a" stroke-width="2" filter="url(#sh2)"/><rect x="694.6" y="137.9" width="59.8" height="13.3" rx="3" fill="none" stroke="#000" stroke-opacity="0.18" stroke-width="1.8" filter="url(#bl2)"/><rect x="693" y="136.3" width="63" height="16.5" rx="4" fill="none" stroke="#f6121a" stroke-width="2" filter="url(#sh2)"/><rect x="414.8" y="234.79999999999998" width="338.1" height="12.8" rx="3" fill="none" stroke="#000" stroke-opacity="0.18" stroke-width="1.8" filter="url(#bl2)"/><rect x="413.2" y="233.2" width="341.3" height="16.0" rx="4" fill="none" stroke="#f6121a" stroke-width="2" filter="url(#sh2)"/><rect x="751.1" y="363.6" width="72.3" height="19.8" rx="3" fill="none" stroke="#000" stroke-opacity="0.18" stroke-width="1.8" filter="url(#bl2)"/><rect x="749.5" y="362" width="75.5" height="23" rx="4" fill="none" stroke="#f6121a" stroke-width="2" filter="url(#sh2)"/><polygon points="454.2,136.6 427,206.3 421.8,204.5 423.8,226 438.8,210.5 433.6,208.7 456.4,137.4" fill="#f4121a"/><g filter="url(#sh)" opacity="0.93"><circle cx="371.4" cy="106.3" r="10.6" fill="url(#cg)" stroke="#f81010" stroke-width="1.3"/></g><text x="371.4" y="110.3" font-size="12" font-family="Liberation Serif" font-weight="bold" fill="#fff" text-anchor="middle">1</text><text x="369.4" y="102.9" font-size="9.6" fill="#5a1010" textLength="18.2" lengthAdjust="spacingAndGlyphs" opacity="0.6">Socio</text><g filter="url(#sh)" opacity="0.93"><circle cx="527.4" cy="121" r="10.6" fill="url(#cg)" stroke="#f81010" stroke-width="1.3"/></g><text x="527.4" y="125" font-size="12" font-family="Liberation Serif" font-weight="bold" fill="#fff" text-anchor="middle">2</text><g filter="url(#sh)" opacity="0.93"><circle cx="414" cy="260.2" r="10.6" fill="url(#cg)" stroke="#f81010" stroke-width="1.3"/></g><text x="414" y="264.2" font-size="12" font-family="Liberation Serif" font-weight="bold" fill="#fff" text-anchor="middle">3</text><g filter="url(#sh)" opacity="0.93"><circle cx="765.9" cy="344.2" r="10.6" fill="url(#cg)" stroke="#f81010" stroke-width="1.3"/></g><text x="765.9" y="348.2" font-size="12" font-family="Liberation Serif" font-weight="bold" fill="#fff" text-anchor="middle">4</text><g filter="url(#sh)" opacity="0.93"><circle cx="541.4" cy="175.3" r="10.6" fill="url(#cg)" stroke="#f81010" stroke-width="1.3"/></g><text x="541.4" y="179.3" font-size="12" font-family="Liberation Serif" font-weight="bold" fill="#fff" text-anchor="middle">5</text><g filter="url(#sh)" opacity="0.93"><circle cx="771.5" cy="134" r="10.6" fill="url(#cg)" stroke="#f81010" stroke-width="1.3"/></g><text x="771.5" y="138" font-size="12" font-family="Liberation Serif" font-weight="bold" fill="#fff" text-anchor="middle">6</text></svg></body></html>
